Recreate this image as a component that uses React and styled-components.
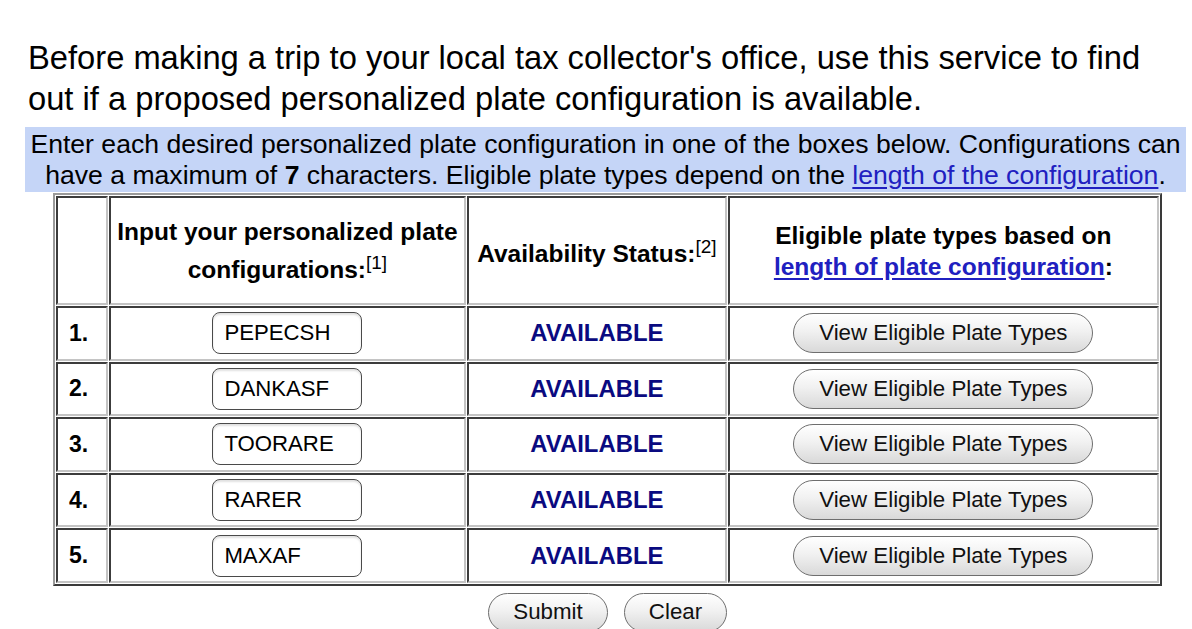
import React from "react";
import styled, { createGlobalStyle } from "styled-components";

const GlobalStyle = createGlobalStyle`
  html, body { margin: 0; padding: 0; background: #fff; }
  body { font-family: "Liberation Sans", Arial, Helvetica, sans-serif; color: #000; }
`;

const Page = styled.div`
  width: 1161px;
  padding: 37px 0 0 25px;
`;

const Intro = styled.p`
  margin: 0 0 8px 3px;
  max-width: 1140px;
  font-size: 32.7px;
  line-height: 41px;
`;

const Notice = styled.div`
  background: #c5d5f7;
  text-align: center;
  font-size: 26.6px;
  line-height: 31px;
  padding: 2px 0 1px;
`;

const Link = styled.a`
  color: #2020c0;
  text-decoration: underline;
  text-underline-offset: 3px;
`;

const Table = styled.table`
  margin: 1px 0 0 28px;
  width: 1109px;
  border-collapse: separate;
  border-spacing: 1px;
  border-style: solid;
  border-width: 2px;
  border-color: #9a9a9a #3a3a3a #3a3a3a #9a9a9a;
`;

const Cell = styled.td`
  border-style: solid;
  border-width: 2px;
  border-color: #3c3c3c #c4c4c4 #c4c4c4 #3c3c3c;
  text-align: center;
  vertical-align: middle;
  padding: 0;
`;

const HeadCell = styled(Cell).attrs({ as: "th" })`
  font-size: 24.5px;
  font-weight: bold;
  line-height: 31px;
  padding: 0 6px;
`;

const Sup = styled.sup`
  font-size: 19px;
  font-weight: normal;
  line-height: 31px;
`;

const HeadRow = styled.tr`
  height: 109px;
`;

const Row = styled.tr`
  height: 54.6px;
`;

const NumCell = styled(Cell)`
  font-size: 23px;
  font-weight: bold;
  text-align: left;
  padding-left: 11px;
`;

const PlateInput = styled.input`
  box-sizing: border-box;
  width: 150px;
  height: 42px;
  border: 1.5px solid #4a4a4a;
  border-radius: 8px;
  padding: 0 11px;
  font-family: "Liberation Sans", Arial, sans-serif;
  font-size: 22.2px;
  color: #000;
  background: #fff;
  box-shadow: inset 0 2px 2px rgba(0, 0, 0, 0.12);
  display: block;
  margin: 0 auto;
`;

const Status = styled.span`
  font-size: 23.9px;
  font-weight: bold;
  color: #0a0a80;
`;

const PillButton = styled.button`
  box-sizing: border-box;
  height: ${(p) => p.$h || 40}px;
  width: ${(p) => p.$w}px;
  border: 1.5px solid #6e6e6e;
  border-radius: 22px;
  background: linear-gradient(#ffffff 0%, #f1f1f1 45%, #d9d9d9 100%);
  font-family: "Liberation Sans", Arial, sans-serif;
  font-size: 22.3px;
  color: #111;
  padding: 0;
  cursor: pointer;
`;

const Actions = styled.div`
  display: flex;
  justify-content: center;
  gap: 16px;
  margin: 7px 0 0 28px;
  width: 1109px;
`;

const plates = ["PEPECSH", "DANKASF", "TOORARE", "RARER", "MAXAF"];

export default function App() {
  return (
    <>
      <GlobalStyle />
      <Page>
        <Intro>
          Before making a trip to your local tax collector's office, use this service to find out if a
          proposed personalized plate configuration is available.
        </Intro>
        <Notice>
          Enter each desired personalized plate configuration in one of the boxes below. Configurations can
          have a maximum of <b>7</b> characters. Eligible plate types depend on the{" "}
          <Link href="#">length of the configuration</Link>.
        </Notice>
        <Table>
          <colgroup>
            <col style={{ width: 52 }} />
            <col style={{ width: 361 }} />
            <col style={{ width: 262 }} />
            <col style={{ width: 434 }} />
          </colgroup>
          <thead>
            <HeadRow>
              <HeadCell />
              <HeadCell>
                Input your personalized plate configurations:<Sup>[1]</Sup>
              </HeadCell>
              <HeadCell>
                Availability Status:<Sup>[2]</Sup>
              </HeadCell>
              <HeadCell>
                Eligible plate types based on <Link href="#">length of plate configuration</Link>:
              </HeadCell>
            </HeadRow>
          </thead>
          <tbody>
            {plates.map((p, i) => (
              <Row key={p}>
                <NumCell>{i + 1}.</NumCell>
                <Cell>
                  <PlateInput defaultValue={p} maxLength={7} />
                </Cell>
                <Cell>
                  <Status>AVAILABLE</Status>
                </Cell>
                <Cell>
                  <PillButton $w={300}>View Eligible Plate Types</PillButton>
                </Cell>
              </Row>
            ))}
          </tbody>
        </Table>
        <Actions>
          <PillButton $w={120} $h={39}>Submit</PillButton>
          <PillButton $w={103} $h={39}>Clear</PillButton>
        </Actions>
      </Page>
    </>
  );
}
